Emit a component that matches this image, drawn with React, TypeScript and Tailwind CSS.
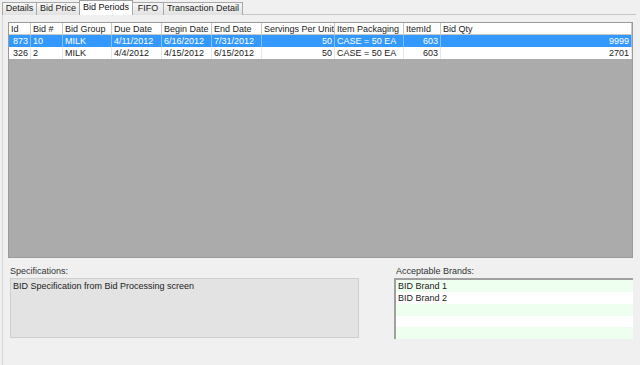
const tabs = [
  { label: "Details", w: "w-[35px]" },
  { label: "Bid Price", w: "w-[44px]" },
  { label: "Bid Periods", w: "w-[54px]" },
  { label: "FIFO", w: "w-[32px]" },
  { label: "Transaction Detail", w: "w-[80px]" },
]

const cols = [
  { label: "Id", w: "w-[22px]" },
  { label: "Bid #", w: "w-[32px]" },
  { label: "Bid Group", w: "w-[49px]" },
  { label: "Due Date", w: "w-[50px]" },
  { label: "Begin Date", w: "w-[50px]" },
  { label: "End Date", w: "w-[50px]" },
  { label: "Servings Per Unit", w: "w-[73px]" },
  { label: "Item Packaging", w: "w-[69px]" },
  { label: "ItemId", w: "w-[37px]" },
  { label: "Bid Qty", w: "flex-1" },
]

const rows = [
  ["873", "10", "MILK", "4/11/2012", "6/16/2012", "7/31/2012", "50", "CASE = 50 EA", "603", "9999"],
  ["326", "2", "MILK", "4/4/2012", "4/15/2012", "6/15/2012", "50", "CASE = 50 EA", "603", "2701"],
]

const rightAligned = [0, 6, 8, 9]

export default function App() {
  return (
    <div className="w-[640px] h-[365px] bg-[#f0f0f0] text-[9px] text-[#222] overflow-hidden" style={{ fontFamily: '"Liberation Sans", Arial, sans-serif' }}>
      {/* Tabs */}
      <div className="flex items-end h-[15px] pl-[2px] pr-[4px]">
        {tabs.map((t) => {
          const active = t.label === "Bid Periods"
          return (
            <div
              key={t.label}
              className={
                active
                  ? `${t.w} h-[15px] bg-white border border-b-0 border-[#a0a0a0] -ml-px flex items-center justify-center text-[#111] whitespace-nowrap`
                  : `${t.w} h-[13px] bg-gradient-to-b from-[#f6f6f6] to-[#e2e2e2] border border-b-0 border-[#a8a8a8] -ml-px first:ml-0 flex items-center justify-center whitespace-nowrap`
              }
            >
              {t.label}
            </div>
          )
        })}
        <div className="flex-1 border-b border-[#c8c8c8]" />
      </div>

      {/* Tab panel */}
      <div className="h-[350px] border-l border-[#d6d6d6] ml-[2px] pl-[5px] pr-[7px] pt-[7px] flex flex-col">
        {/* Table */}
        <div className="h-[236px] border border-[#9a9a9a] bg-[#ababab] flex flex-col">
          <div className="flex h-[12px] bg-white border-b border-[#c8c8c8]">
            {cols.map((c) => (
              <div key={c.label} className={`${c.w} border-r border-[#c8c8c8] pl-[2px] leading-[12px] whitespace-nowrap overflow-hidden`}>
                {c.label}
              </div>
            ))}
          </div>
          {rows.map((r, i) => (
            <div key={i} className={`flex h-[12px] ${i === 0 ? "bg-[#3399ff] text-white" : "bg-white"}`}>
              {r.map((v, j) => (
                <div
                  key={j}
                  className={`${cols[j].w} border-r ${i === 0 ? "border-[#7fbfff]" : "border-[#e6e6e6]"} px-[2px] leading-[12px] whitespace-nowrap overflow-hidden ${rightAligned.includes(j) ? "text-right" : ""}`}
                >
                  {v}
                </div>
              ))}
            </div>
          ))}
        </div>

        {/* Bottom section */}
        <div className="flex mt-[7px]">
          <div className="w-[349px] ml-[2px]">
            <div className="h-[12px] leading-[12px] text-[#333]">Specifications:</div>
            <div className="h-[60px] mt-[1px] bg-[#e3e3e3] border border-[#cfcfcf] px-[2px] pt-[1px]">
              BID Specification from Bid Processing screen
            </div>
          </div>
          <div className="flex-1" />
          <div className="w-[239px]">
            <div className="h-[12px] leading-[12px] text-[#333] pl-[2px]">Acceptable Brands:</div>
            <div className="h-[61px] mt-[1px] bg-white border-t-2 border-l-2 border-[#a0a0a0] flex flex-col">
              {["BID Brand 1", "BID Brand 2", "", "", ""].map((b, i) => (
                <div key={i} className={`h-[12px] leading-[12px] pl-[2px] ${i % 2 === 0 ? "bg-[#efffef]" : "bg-white"}`}>
                  {b}
                </div>
              ))}
            </div>
          </div>
        </div>
      </div>
    </div>
  )
}
